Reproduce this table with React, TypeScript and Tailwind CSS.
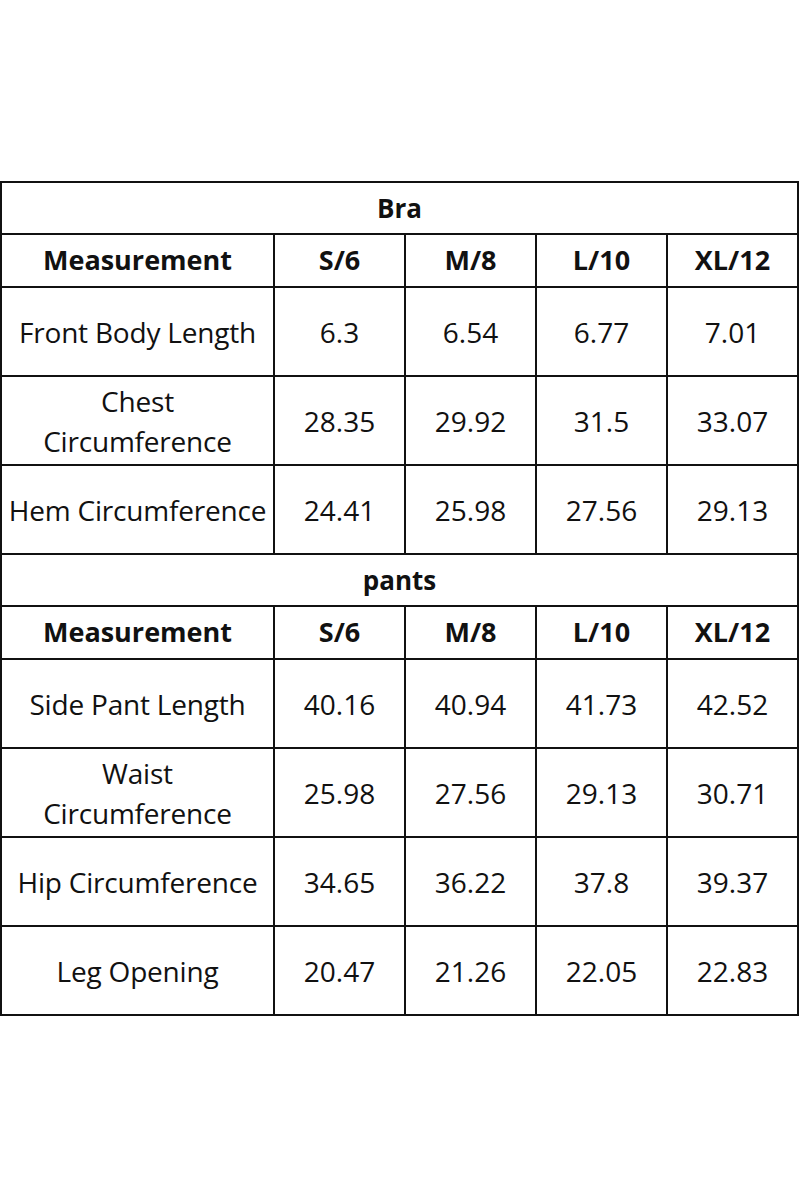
import React from "react";

const sizes = ["S/6", "M/8", "L/10", "XL/12"];

type Row = { label: React.ReactNode; vals: string[] };

const bra: Row[] = [
  { label: "Front Body Length", vals: ["6.3", "6.54", "6.77", "7.01"] },
  { label: <>Chest<br />Circumference</>, vals: ["28.35", "29.92", "31.5", "33.07"] },
  { label: "Hem Circumference", vals: ["24.41", "25.98", "27.56", "29.13"] },
];

const pants: Row[] = [
  { label: "Side Pant Length", vals: ["40.16", "40.94", "41.73", "42.52"] },
  { label: <>Waist<br />Circumference</>, vals: ["25.98", "27.56", "29.13", "30.71"] },
  { label: "Hip Circumference", vals: ["34.65", "36.22", "37.8", "39.37"] },
  { label: "Leg Opening", vals: ["20.47", "21.26", "22.05", "22.83"] },
];

const td = "border-2 border-[#111] text-center align-middle p-0";

function Section({ title, rows }: { title: string; rows: Row[] }) {
  return (
    <>
      <tr className="h-[52px]">
        <td colSpan={5} className={`${td} font-bold text-[26px]`}>{title}</td>
      </tr>
      <tr className="h-[53px]">
        <td className={`${td} font-bold text-[27px]`}>Measurement</td>
        {sizes.map((s) => (
          <td key={s} className={`${td} font-bold text-[27px]`}>{s}</td>
        ))}
      </tr>
      {rows.map((r, i) => (
        <tr key={i} className="h-[89px]">
          <td className={`${td} leading-[40px] whitespace-nowrap tracking-[-0.2px]`}>{r.label}</td>
          {r.vals.map((v, j) => (
            <td key={j} className={td}>{v}</td>
          ))}
        </tr>
      ))}
    </>
  );
}

export default function App() {
  return (
    <div className="w-[800px] h-[1200px] bg-white pt-[181px] text-[#111] text-[28px]" style={{ fontFamily: '"Open Sans", "Noto Sans", sans-serif' }}>
      <table className="table-fixed border-collapse w-[798px]">
        <colgroup>
          <col className="w-[273px]" />
          <col className="w-[131px]" />
          <col className="w-[131px]" />
          <col className="w-[131px]" />
          <col className="w-[131px]" />
        </colgroup>
        <tbody>
          <Section title="Bra" rows={bra} />
          <Section title="pants" rows={pants} />
        </tbody>
      </table>
    </div>
  );
}
